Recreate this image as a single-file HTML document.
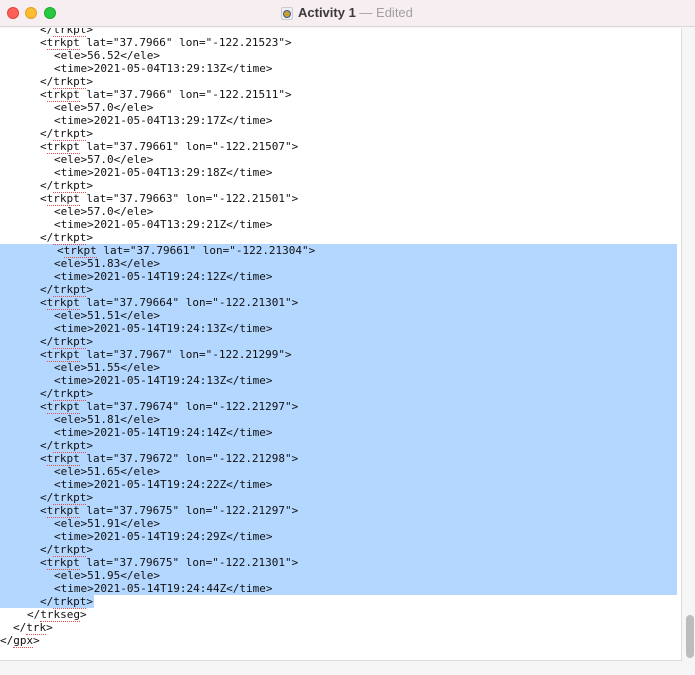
<!DOCTYPE html>
<html><head><meta charset="utf-8"><style>
*{margin:0;padding:0;box-sizing:border-box}
body{width:695px;height:675px;background:#f6f6f6;position:relative;overflow:hidden;font-family:"DejaVu Sans Mono","Liberation Mono",monospace}
#tb{position:absolute;left:0;top:0;width:695px;height:27px;background:#f7eef1;border-bottom:1px solid #dcd6d8}
.dot{position:absolute;top:7px;width:12px;height:12px;border-radius:50%}
#title{position:absolute;left:298px;top:5px;font:bold 13px "Liberation Sans",sans-serif;color:#3a3a3a}
#title span{font-weight:normal;color:#a0a0a0}
#icon{position:absolute;left:281px;top:7px;width:12px;height:13px;background:#eee;border:1px solid #ccc;border-radius:2px}
#icon:after{content:"";position:absolute;left:2px;top:3px;width:6px;height:6px;border-radius:50%;background:#c9a02a;box-shadow:0 0 0 1px #3a56a8}
#ed{position:absolute;left:0;top:28px;width:682px;height:633px;background:#fff;border-right:1px solid #ddd;border-bottom:1px solid #ddd;overflow:hidden}
.hl{position:absolute;background:#b3d7ff}
.l{position:absolute;left:0;height:13px;font-size:11px;line-height:13px;color:#111;white-space:pre}
u{text-decoration:none;border-bottom:1.5px dotted #e05050}
#thumb{position:absolute;left:686px;top:615px;width:8px;height:43px;border-radius:4px;background:#bdbdbd}
</style></head><body>
<div id="tb">
<div class="dot" style="left:7px;background:#fe5f57;border:1px solid #e0443e"></div>
<div class="dot" style="left:25px;background:#febc2e;border:1px solid #dea123"></div>
<div class="dot" style="left:44px;background:#28c840;border:1px solid #1aab29"></div>
<div id="icon"></div>
<div id="title">Activity 1 <span>— Edited</span></div>
</div>
<div id="ed">
<div class="hl" style="left:0;top:216px;width:677px;height:351px"></div>
<div class="hl" style="left:0;top:566px;width:94px;height:14px"></div>
<div id="lines"></div>
</div>
<div id="thumb"></div>
<script>
var L=[[40,'&lt;/<u>trkpt</u>&gt;']];
var pts=[['37.7966','-122.21523','56.52','2021-05-04T13:29:13Z'],['37.7966','-122.21511','57.0','2021-05-04T13:29:17Z'],['37.79661','-122.21507','57.0','2021-05-04T13:29:18Z'],['37.79663','-122.21501','57.0','2021-05-04T13:29:21Z'],['37.79661','-122.21304','51.83','2021-05-14T19:24:12Z'],['37.79664','-122.21301','51.51','2021-05-14T19:24:13Z'],['37.7967','-122.21299','51.55','2021-05-14T19:24:13Z'],['37.79674','-122.21297','51.81','2021-05-14T19:24:14Z'],['37.79672','-122.21298','51.65','2021-05-14T19:24:22Z'],['37.79675','-122.21297','51.91','2021-05-14T19:24:29Z'],['37.79675','-122.21301','51.95','2021-05-14T19:24:44Z']];
pts.forEach(function(p,i){
L.push([i==4?57:40,'&lt;<u>trkpt</u> lat="'+p[0]+'" lon="'+p[1]+'"&gt;']);
L.push([54,'&lt;ele&gt;'+p[2]+'&lt;/ele&gt;']);
L.push([54,'&lt;time&gt;'+p[3]+'&lt;/time&gt;']);
L.push([40,'&lt;/<u>trkpt</u>&gt;']);
});
L.push([27,'&lt;/<u>trkseg</u>&gt;']);L.push([13,'&lt;/<u>trk</u>&gt;']);L.push([0,'&lt;/<u>gpx</u>&gt;']);
var h='';L.forEach(function(l,i){h+='<div class="l" style="left:'+l[0]+'px;top:'+(-5+i*13)+'px">'+l[1]+'</div>';});
document.getElementById('lines').innerHTML=h;
</script>
</body></html>
